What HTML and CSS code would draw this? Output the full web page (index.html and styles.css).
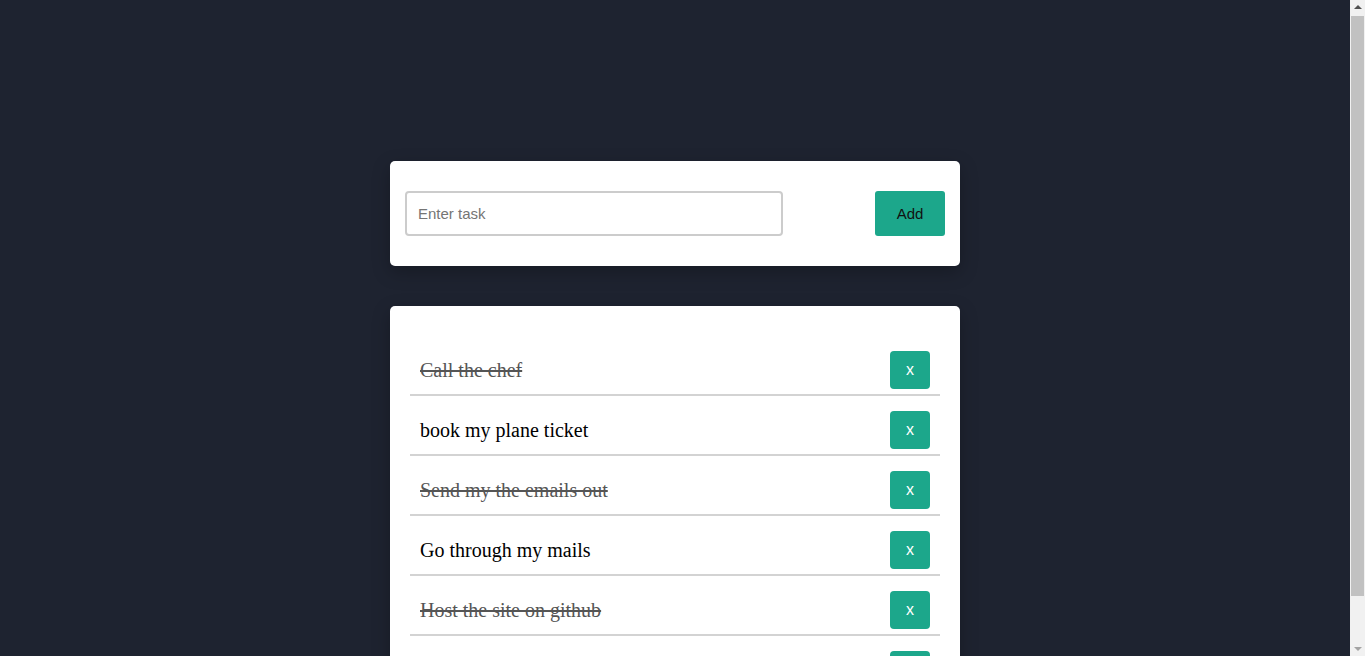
FILE: index.html
```html
<!DOCTYPE html>
<html lang="en">
<head>
<meta charset="utf-8">
<title>Todo</title>
<link rel="stylesheet" href="styles.css">
</head>
<body>
<main class="container">
  <form class="card add-card">
    <input class="task-input" type="text" placeholder="Enter task">
    <button class="add-btn" type="button">Add</button>
  </form>
  <section class="card list-card">
    <ul class="task-list">
      <li class="task done"><span class="task-text">Call the chef</span><button class="del-btn" type="button">x</button></li>
      <li class="task"><span class="task-text">book my plane ticket</span><button class="del-btn" type="button">x</button></li>
      <li class="task done"><span class="task-text">Send my the emails out</span><button class="del-btn" type="button">x</button></li>
      <li class="task"><span class="task-text">Go through my mails</span><button class="del-btn" type="button">x</button></li>
      <li class="task done"><span class="task-text">Host the site on github</span><button class="del-btn" type="button">x</button></li>
      <li class="task"><span class="task-text">Buy groceries</span><button class="del-btn" type="button">x</button></li>
    </ul>
  </section>
</main>
<div class="scrollbar" aria-hidden="true">
  <span class="arrow arrow-up"></span>
  <span class="thumb"></span>
  <span class="arrow arrow-down"></span>
</div>
</body>
</html>
```

FILE: styles.css
```css
html, body {
  margin: 0;
  padding: 0;
}
body {
  background: #1e2330;
  font-family: "Liberation Serif", "Times New Roman", serif;
  min-height: 704px;
  padding-right: 15px;
}
.container {
  width: 570px;
  margin: 0 auto;
  padding-top: 161px;
}
.card {
  background: #ffffff;
  border-radius: 5px;
  box-shadow: 0 6px 18px rgba(0, 0, 0, 0.25);
}
.add-card {
  margin: 0;
  padding: 30px 15px 30px;
  display: flex;
  justify-content: space-between;
  align-items: center;
}
.task-input {
  box-sizing: border-box;
  width: 378px;
  height: 45px;
  border: 2px solid #cccccc;
  border-radius: 4px;
  padding: 0 11px;
  font-family: "Liberation Sans", Arial, sans-serif;
  font-size: 15px;
  color: #222;
  outline: none;
}
.task-input::placeholder {
  color: #757575;
}
.add-btn {
  box-sizing: border-box;
  width: 70px;
  height: 45px;
  border: none;
  border-radius: 3px;
  background: #1ca78b;
  color: #111111;
  font-family: "Liberation Sans", Arial, sans-serif;
  font-size: 15px;
  cursor: pointer;
}
.list-card {
  margin-top: 40px;
  padding: 30px 20px 0;
  border-radius: 5px 5px 0 0;
}
.task-list {
  list-style: none;
  margin: 0;
  padding: 0;
}
.task {
  display: flex;
  justify-content: space-between;
  align-items: center;
  margin-top: 10px;
  padding: 5px 10px;
  border-bottom: 2px solid #d3d3d3;
}
.task-text {
  font-size: 20px;
  color: #000000;
}
.task.done .task-text {
  color: #555555;
  text-decoration: line-through;
}
.del-btn {
  box-sizing: border-box;
  width: 40px;
  height: 38px;
  border: none;
  border-radius: 4px;
  background: #1ca78b;
  color: #ffffff;
  font-family: "Liberation Sans", Arial, sans-serif;
  font-size: 16px;
  cursor: pointer;
}
.scrollbar {
  position: fixed;
  top: 0;
  right: 0;
  width: 15px;
  height: 100vh;
  background: #f1f1f1;
  display: flex;
  flex-direction: column;
  align-items: center;
}
.arrow {
  width: 0;
  height: 0;
  border-left: 4px solid transparent;
  border-right: 4px solid transparent;
}
.arrow-up {
  margin-top: 5px;
  border-bottom: 4px solid #505050;
}
.arrow-down {
  margin-top: auto;
  margin-bottom: 5px;
  border-top: 4px solid #a3a3a3;
}
.thumb {
  width: 13px;
  height: 580px;
  margin-top: 7px;
  background: #c1c1c1;
}
```
